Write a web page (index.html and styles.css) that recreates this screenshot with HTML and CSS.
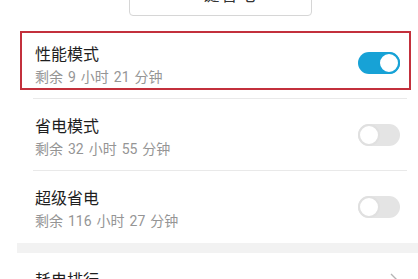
FILE: index.html
```html
<!DOCTYPE html>
<html lang="zh">
<head>
<meta charset="utf-8">
<link rel="stylesheet" href="styles.css">
</head>
<body>
<div class="top">
  <div class="btn">一键省电</div>
</div>
<div class="list">
  <div class="row">
    <div class="texts">
      <div class="title">性能模式</div>
      <div class="sub">剩余 9 小时 21 分钟</div>
    </div>
    <div class="toggle on"><span class="knob"></span></div>
    <div class="highlight"></div>
  </div>
  <div class="row">
    <div class="texts">
      <div class="title">省电模式</div>
      <div class="sub">剩余 32 小时 55 分钟</div>
    </div>
    <div class="toggle"><span class="knob"></span></div>
  </div>
  <div class="row last">
    <div class="texts">
      <div class="title">超级省电</div>
      <div class="sub">剩余 116 小时 27 分钟</div>
    </div>
    <div class="toggle"><span class="knob"></span></div>
  </div>
  <div class="band"></div>
  <div class="row link">
    <div class="texts">
      <div class="title">耗电排行</div>
    </div>
    <svg class="chev" width="8" height="14" viewBox="0 0 8 14"><path d="M1 1 L7 7 L1 13" fill="none" stroke="#b5b5b5" stroke-width="1.4"/></svg>
  </div>
</div>
</body>
</html>
```

FILE: styles.css
```css
* { box-sizing: border-box; }
html, body { margin: 0; padding: 0; background: #fff; overflow: hidden; }
body {
  width: 418px;
  height: 279px;
  font-family: "Noto Sans CJK SC", "Noto Sans", sans-serif;
  color: #222;
}
.top {
  display: flex;
  justify-content: center;
  padding-left: 23px;
  height: 27px;
  align-items: flex-start;
}
.btn {
  width: 183px;
  height: 46px;
  margin-top: -30px;
  border: 1.5px solid #d6d6d6;
  border-radius: 4px;
  display: flex;
  align-items: center;
  justify-content: center;
  font-size: 17px;
  color: #333;
  letter-spacing: 1px;
}
.list {
  margin-left: 17px;
}
.row {
  position: relative;
  height: 72px;
  display: flex;
  align-items: flex-start;
  justify-content: space-between;
  padding: 0 18px 0 18px;
}
.row::after {
  content: "";
  position: absolute;
  left: 16px;
  right: 11px;
  bottom: 0;
  height: 1px;
  background: #e9e9e9;
}
.row.last::after, .row.link::after { display: none; }
.texts {
  display: flex;
  flex-direction: column;
  padding-top: 14px;
}
.title {
  font-size: 16px;
  line-height: 24px;
  color: #1e1e1e;
}
.sub {
  font-family: Roboto, "Noto Sans CJK SC", sans-serif;
  font-size: 14px;
  line-height: 24px;
  color: #959595;
  word-spacing: 1.5px;
}
.toggle {
  margin-top: 25px;
  width: 42px;
  height: 22px;
  border-radius: 11px;
  background: #e4e4e4;
  position: relative;
  display: flex;
  align-items: center;
}
.knob {
  width: 22px;
  height: 22px;
  border-radius: 50%;
  background: #fff;
  border: 2px solid #e0e0e0;
}
.toggle.on {
  background: #17a2d6;
  justify-content: flex-end;
}
.toggle.on .knob { border-color: #17a2d6; }
.highlight {
  position: absolute;
  left: 3px;
  top: 4px;
  width: 391px;
  height: 59px;
  border: 2px solid #c3303c;
  pointer-events: none;
}
.band {
  height: 10px;
  background: #f2f2f2;
}
.row.link .texts { padding-top: 14px; }
.chev { margin-top: 20px; margin-right: 2px; }
```
